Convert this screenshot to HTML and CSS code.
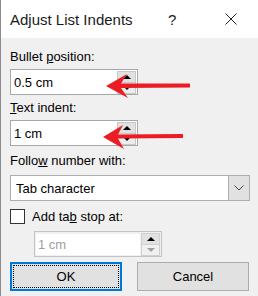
FILE: index.html
```html
<!DOCTYPE html>
<html lang="en">
<head>
  <meta charset="UTF-8" />
  <title>Adjust List Indents</title>
  <link rel="stylesheet" href="styles.css">
</head>
<body>

  <div class="dialog">
    <div class="titlebar">
      <span class="title">Adjust List Indents</span>
      <span class="help">?</span>
      <svg class="close" width="12" height="12" viewBox="0 0 12 12"><path d="M0.5 0.5 L11.5 11.5 M11.5 0.5 L0.5 11.5" stroke="#222" stroke-width="1"/></svg>
    </div>

    <div class="content">
      <div class="label">Bullet <u>p</u>osition:</div>
      <div class="spin">
        <span class="spin-value">0.5 cm</span>
        <div class="spin-buttons">
          <div class="spin-btn up"></div>
          <div class="spin-btn down"></div>
        </div>
      </div>

      <div class="label second"><u>T</u>ext indent:</div>
      <div class="spin">
        <span class="spin-value">1 cm</span>
        <div class="spin-buttons">
          <div class="spin-btn up"></div>
          <div class="spin-btn down"></div>
        </div>
      </div>

      <div class="label third">Follo<u>w</u> number with:</div>
      <div class="select">
        <span class="select-value">Tab character</span>
        <div class="select-btn">
          <svg width="10" height="6" viewBox="0 0 10 6"><path d="M0.5 0.5 L5 5 L9.5 0.5" fill="none" stroke="#444" stroke-width="1"/></svg>
        </div>
      </div>

      <div class="check-row">
        <span class="checkbox"></span>
        <span>Add ta<u>b</u> stop at:</span>
      </div>

      <div class="spin disabled">
        <span class="spin-value">1 cm</span>
        <div class="spin-buttons">
          <div class="spin-btn up"></div>
          <div class="spin-btn down"></div>
        </div>
      </div>

      <div class="buttons">
        <button class="btn default"><span class="focus">OK</span></button>
        <button class="btn">Cancel</button>
      </div>
    </div>

    <!-- red annotation arrows -->
    <svg class="arrows" width="258" height="296" viewBox="0 0 258 296">
      <polygon points="106,86 127,74 121,83.5 190,83.5 190,87.5 121,88 128,98" fill="#ec1c24"/>
      <polygon points="103,137 123,125 118,134.5 183,134 183,138 118,138.5 124,149" fill="#ec1c24"/>
    </svg>
  </div>

</body>
</html>
```

FILE: styles.css
```css
body {
  margin: 0;
  font-family: "Segoe UI", "Liberation Sans", sans-serif;
  font-size: 13px;
  color: #000;
}

.dialog {
  position: relative;
  width: 257px;
  height: 296px;
  border-left: 1px solid #8c8c8c;
  background: #f0f0f0;
  overflow: hidden;
}

.titlebar {
  height: 38px;
  background: #fff;
  display: flex;
  align-items: center;
  font-size: 15px;
  color: #1a1a1a;
}

.title {
  padding-left: 9px;
  width: 158px;
}

.help {
  width: 57px;
}

.content {
  padding: 11px 0 0 9px;
}

.label {
  height: 16px;
  line-height: 16px;
}

.label.second {
  margin-top: 5px;
}

.label.third {
  margin-top: 7px;
}

.spin {
  margin-top: 4px;
  width: 126px;
  height: 24px;
  border: 1px solid #a8a8a8;
  background: #fff;
  display: flex;
  align-items: center;
  justify-content: space-between;
}

.spin-value {
  padding-left: 3px;
}

.spin-buttons {
  width: 19px;
  height: 23px;
  display: flex;
  flex-direction: column;
  margin-right: 1px;
}

.spin-btn {
  flex: 1;
  background: #e1e1e1;
  border: 1px solid #c8c8c8;
  display: flex;
  align-items: center;
  justify-content: center;
}

.spin-btn.down {
  background: #ececec;
  border-top: none;
}

.spin-btn::after {
  content: "";
  border-left: 4px solid transparent;
  border-right: 4px solid transparent;
}

.spin-btn.up::after {
  border-bottom: 4px solid #000;
}

.spin-btn.down::after {
  border-top: 4px solid #000;
}

.select {
  margin-top: 6px;
  width: 238px;
  height: 24px;
  border: 1px solid #adadad;
  background: #fff;
  display: flex;
  align-items: center;
  justify-content: space-between;
}

.select-value {
  padding-left: 5px;
}

.select-btn {
  width: 20px;
  height: 24px;
  background: #e1e1e1;
  border-left: 1px solid #adadad;
  display: flex;
  align-items: center;
  justify-content: center;
}

.check-row {
  margin-top: 7px;
  display: flex;
  align-items: center;
  gap: 7px;
  height: 16px;
}

.checkbox {
  width: 13px;
  height: 13px;
  border: 1px solid #333;
  background: #fff;
}

.spin.disabled {
  margin-top: 7px;
  margin-left: 24px;
  border-color: #c3c3c3;
  background: #f0f0f0;
}

.spin.disabled .spin-value {
  color: #a0a0a0;
  background: #fff;
  flex: 1;
  margin: 1px;
  padding-left: 2px;
  line-height: 21px;
}

.spin.disabled .spin-btn {
  background: #f0f0f0;
  border-color: #d0d0d0;
}

.spin.disabled .spin-btn.up {
  background: #e1e1e1;
}

.spin.disabled .spin-btn.down::after {
  border-top-color: #a0a0a0;
}

.buttons {
  margin-top: 5px;
  display: flex;
  gap: 15px;
}

.btn {
  width: 112px;
  height: 29px;
  padding: 0;
  background: #e1e1e1;
  border: 1px solid #adadad;
  font-family: inherit;
  font-size: 13px;
  color: #000;
}

.btn.default {
  border: 2px solid #0078d7;
  padding: 1px;
}

.focus {
  display: flex;
  align-items: center;
  justify-content: center;
  height: 100%;
  border: 1px dotted #000;
  box-sizing: border-box;
}

.arrows {
  position: absolute;
  top: 0;
  left: -1px;
  pointer-events: none;
}
```
